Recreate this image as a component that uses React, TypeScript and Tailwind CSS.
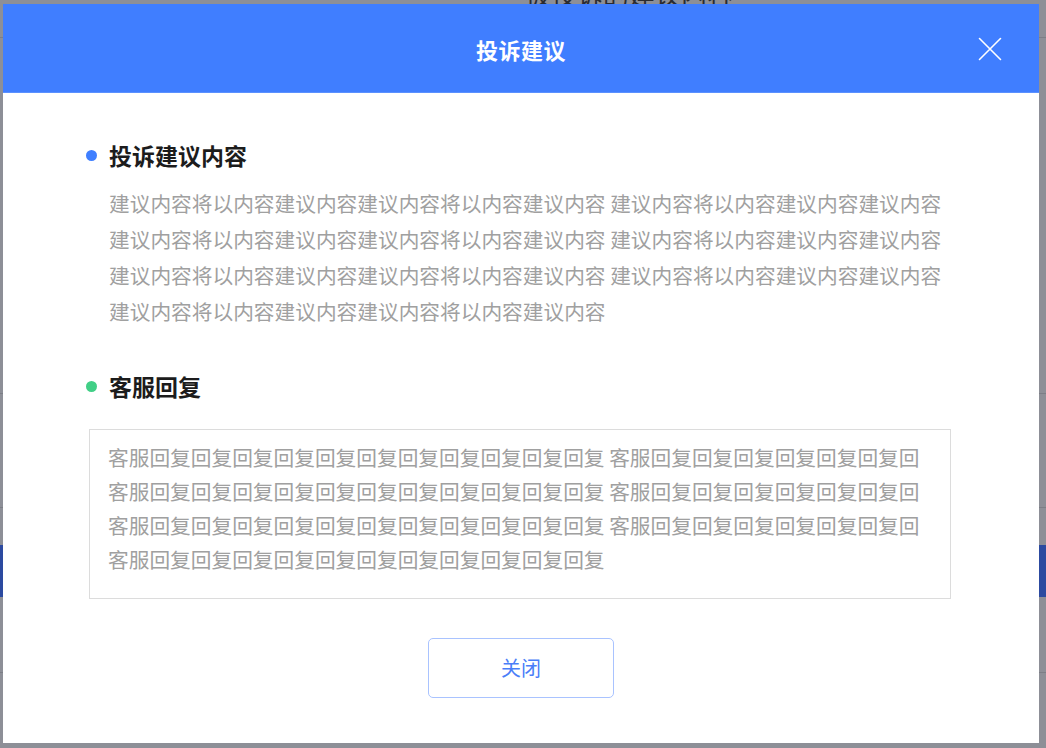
import React from "react";

const A1 = "建议内容将以内容建议内容建议内容将以内容建议内容";
const B1 = "建议内容将以内容建议内容建议内容";
const TEXT1 = `${A1} ${B1}`.repeat(3) + A1;

const A2 = "客服" + "回复".repeat(11);
const B2 = "客服" + "回复".repeat(6) + "回";
const TEXT2 = `${A2} ${B2}`.repeat(3) + A2;

function Background() {
  return (
    <div className="flex flex-col w-full h-full bg-[#8d8f97]">
      <div className="h-[37px] pl-[525px] overflow-hidden">
        <div className="-mt-[19px] text-[26px] leading-[26px] text-[#2a2b30]">被投诉的建议内容</div>
      </div>
      <div className="h-px bg-[#7c7e86]" />
      <div className="h-[355px]" />
      <div className="h-px bg-[#7c7e86]" />
      <div className="h-[113px]" />
      <div className="h-px bg-[#7c7e86]" />
      <div className="h-[37px]" />
      <div className="h-[52px] bg-[#2c4aa0]" />
      <div className="h-[75px]" />
      <div className="h-px bg-[#7c7e86]" />
      <div className="flex-1" />
    </div>
  );
}

export default function App() {
  return (
    <div className="relative w-[1046px] h-[748px] overflow-hidden font-['Noto_Sans_CJK_SC','Noto_Sans',sans-serif]">
      <Background />
      <div className="absolute left-[3px] top-[4px] w-[1036px] h-[739px] bg-white flex flex-col">
        <div className="relative h-[89px] shrink-0 bg-[#407eff] border-b border-[#5b91ff] flex items-center justify-center pt-[3px]">
          <span className="text-white text-[22px] font-bold tracking-[0.5px]">投诉建议</span>
          <button className="absolute right-[37px] top-[33px] w-[24px] h-[24px] flex items-center justify-center">
            <svg width="24" height="24" viewBox="0 0 24 24" fill="none">
              <path d="M1.5 1.5 L22.5 22.5 M22.5 1.5 L1.5 22.5" stroke="#ffffff" strokeWidth="1.6" strokeLinecap="round" />
            </svg>
          </button>
        </div>
        <div className="flex flex-col pl-[83px]">
          <div className="mt-[47px] flex items-center gap-[12px] h-[30px]">
            <span className="w-[11px] h-[11px] rounded-full bg-[#3f7fff]" />
            <span className="text-[23px] leading-[30px] font-bold text-[#1c1c1c]">投诉建议内容</span>
          </div>
          <p className="mt-[15px] ml-[23px] w-[840px] text-[20.7px] leading-[36px] text-[#a0a0a0]">{TEXT1}</p>
          <div className="mt-[42px] flex items-center gap-[12px] h-[30px]">
            <span className="w-[11px] h-[11px] rounded-full bg-[#41cf86]" />
            <span className="text-[23px] leading-[30px] font-bold text-[#1c1c1c]">客服回复</span>
          </div>
          <div className="mt-[28px] ml-[3px] w-[862px] h-[170px] border border-[#dcdcdc] px-[18px] pt-[10px]">
            <p className="text-[20.7px] leading-[34px] text-[#a0a0a0]">{TEXT2}</p>
          </div>
        </div>
        <div className="mt-[39px] flex justify-center">
          <button className="w-[186px] h-[60px] border border-[#a9c3ff] rounded-[5px] text-[#4a7ef8] text-[20px] bg-white">关闭</button>
        </div>
      </div>
    </div>
  );
}
